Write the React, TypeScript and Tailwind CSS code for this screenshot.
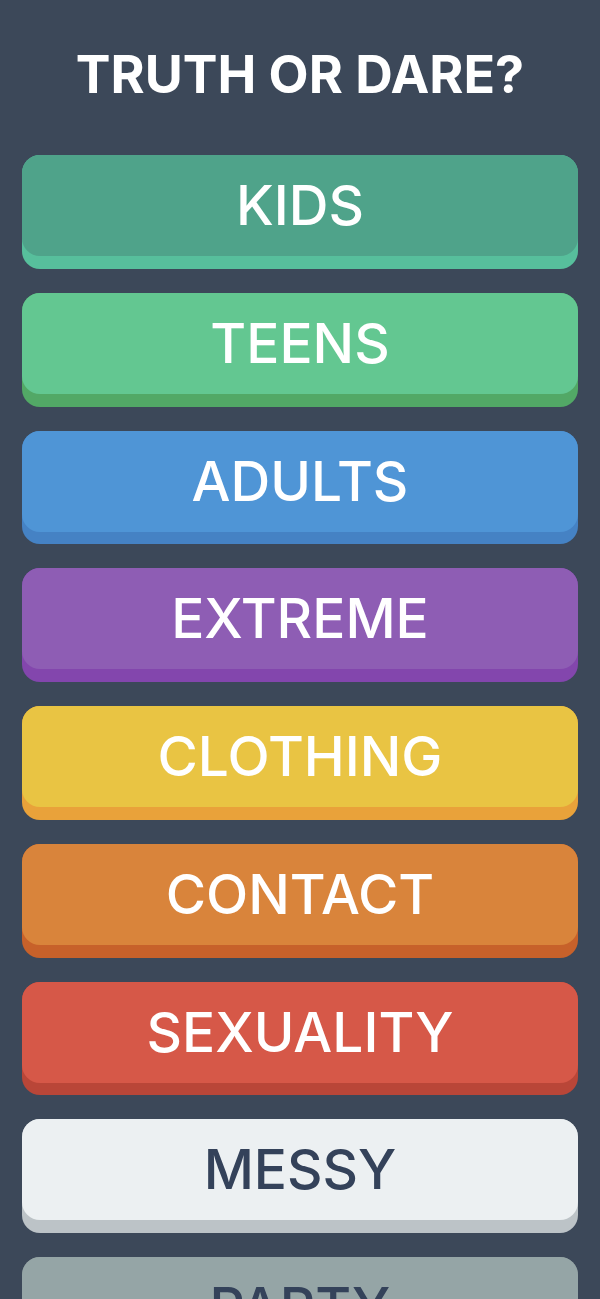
const categories = [
	{ label: "KIDS", face: "bg-[#4fa38a]", edge: "bg-[#57bf9c]", text: "text-white" },
	{ label: "TEENS", face: "bg-[#63c791]", edge: "bg-[#52a866]", text: "text-white" },
	{ label: "ADULTS", face: "bg-[#4f95d6]", edge: "bg-[#4582c4]", text: "text-white" },
	{ label: "EXTREME", face: "bg-[#8e5db4]", edge: "bg-[#8346ad]", text: "text-white" },
	{ label: "CLOTHING", face: "bg-[#e9c443]", edge: "bg-[#e9a23a]", text: "text-white" },
	{ label: "CONTACT", face: "bg-[#d9843b]", edge: "bg-[#c7612a]", text: "text-white" },
	{ label: "SEXUALITY", face: "bg-[#d65848]", edge: "bg-[#b94638]", text: "text-white" },
	{ label: "MESSY", face: "bg-[#ecf0f2]", edge: "bg-[#bcc3c7]", text: "text-[#34425a]" },
	{ label: "PARTY", face: "bg-[#95a5a6]", edge: "bg-[#7f8c8d]", text: "text-[#34425a]" },
]

function CategoryButton({ label, face, edge, text }: (typeof categories)[number]) {
	return (
		<button type="button" className={`w-full rounded-[18px] ${edge} pb-[12.75px] block`}>
			<div className={`h-[101px] rounded-[18px] ${face} flex items-center justify-center`}>
				<span className={`text-[55px] leading-none font-medium ${text}`}>{label}</span>
			</div>
		</button>
	)
}

export default function App() {
	return (
		<div
			className="min-h-screen bg-[#3c4859] px-[22px] pt-[47px]"
			style={{ fontFamily: "Inter, 'Open Sans', sans-serif" }}
		>
			<h1 className="text-center text-white text-[52px] leading-[56px] font-bold mb-[52px]">TRUTH OR DARE?</h1>
			<div className="flex flex-col gap-[24px]">
				{categories.map((c) => (
					<CategoryButton key={c.label} {...c} />
				))}
			</div>
		</div>
	)
}
